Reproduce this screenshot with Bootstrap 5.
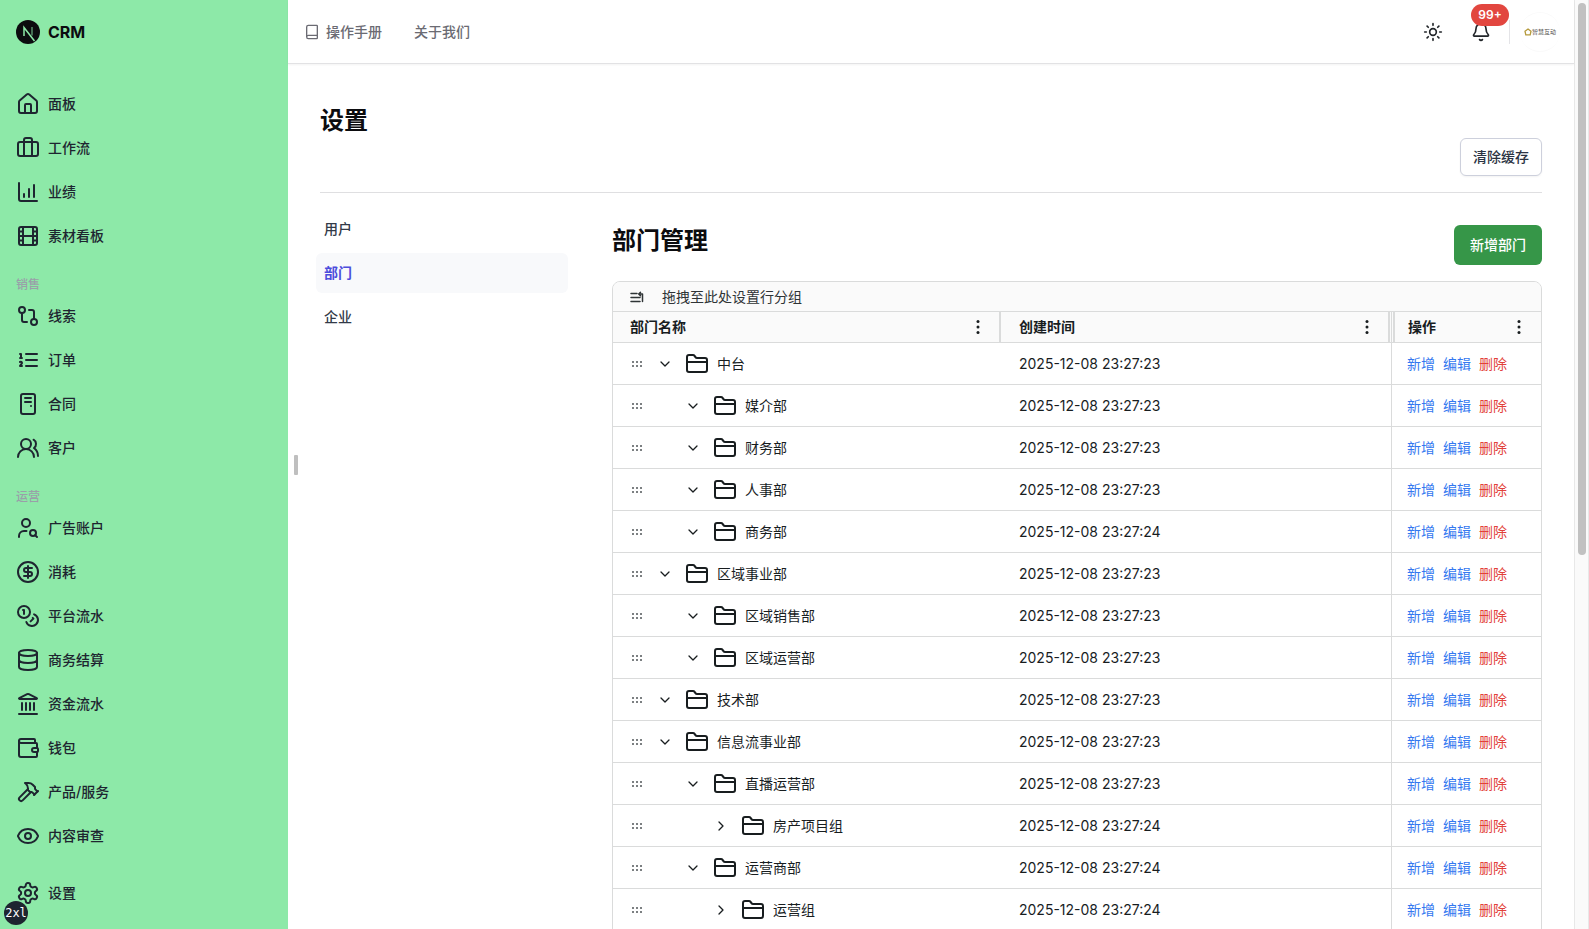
<!DOCTYPE html>
<html lang="zh-CN">
<head>
<meta charset="utf-8">
<meta name="viewport" content="width=device-width, initial-scale=1">
<title>CRM - 设置</title>
<link href="https://cdn.jsdelivr.net/npm/bootstrap@5.3.0/dist/css/bootstrap.min.css" rel="stylesheet">
<style>
  body { font-family: Inter, "Noto Sans CJK SC", sans-serif; font-size: 14px; line-height: 20px; color: #0c0c0f; background: #fff; }
  .ico { width: 24px; height: 24px; flex: none; fill: none; stroke: currentColor; stroke-width: 2; stroke-linecap: round; stroke-linejoin: round; }
  .ico-20 { width: 20px; height: 20px; }
  .ico-16 { width: 16px; height: 16px; }
  .ico-14 { width: 14px; height: 14px; }

  .side { width: 288px; flex: none; background: #8de9a8; }
  .side-brand { height: 64px; color: #0c0c0f; font-size: 16px; }
  .side-list { padding: 20px 16px 16px; }
  .side-link { height: 40px; color: #1e2530; margin-bottom: 4px; }
  .side-title { font-size: 12px; line-height: 18px; color: #9a9fa8; margin: 16px 0 2px; }
  .bp-tag { left: 4px; bottom: 4px; width: 24px; height: 24px; font: 12px/24px "DejaVu Sans Mono", monospace; background: #1e2530; }

  .top { height: 64px; flex: none; border-bottom: 1px solid #e2e2e4; box-shadow: 0 1px 2px rgba(0,0,0,.05); padding: 0 14px 0 16px; }
  .top-nav { gap: 32px; }
  .top-link { color: #6b6b73; gap: 6px; }
  .icon-btn { width: 20px; height: 20px; }
  .icon-gap { gap: 28px; }
  .count { left: 0; top: -18px; width: 38px; height: 22px; font-size: 12px; line-height: 22px; background: #e2463f; }
  .split { width: 1px; height: 24px; background: #e4e4e7; margin: 0 10px 0 18px; }
  .avatar { width: 40px; height: 40px; color: #55534f; font-size: 6px; line-height: 8px; border-top: 1px solid #fafafa; border-bottom: 1px solid #fafafa; }

  .view { flex: 1; min-width: 0; }
  .scroller { scrollbar-width: none; padding: 0 32px; }
  .track { width: 15px; flex: none; background: #fafafa; border: solid #e8e8e8; border-width: 0 1px; padding: 3px 2px 0 3px; }
  .thumb { height: 59.6%; width: 8px; background: #c1c1c1; border-radius: 4px; }
  .grip { left: 6px; top: 49%; width: 4px; height: 20px; background: #bfbfbf; border-radius: 1px; }

  .page-head { height: 129px; border-bottom: 1px solid #dfdfe1; padding-top: 40px; }
  .big { font-size: 24px; line-height: 32px; font-weight: 700; margin: 0; }
  .page-head .big { line-height: 34px; }
  .btn-clear { height: 38px; padding: 0 12px; font-size: 14px; line-height: 20px; border: 1px solid #cdd0dc; border-radius: 6px; color: #2c3444; box-shadow: 0 1px 2px rgba(0,0,0,.05); }
  .btn-add { height: 40px; padding: 0 16px; font-size: 14px; line-height: 20px; border: 0; border-radius: 6px; color: #fff; background: #369648; }
  .tabs { width: 252px; flex: none; margin-left: -4px; }
  .tab-link { height: 40px; padding: 0 8px; color: #323a48; border-radius: 6px; margin-bottom: 4px; }
  .tab-link.on { background: #f8f9fb; color: #4c4ddc; }
  .panel { margin-left: 44px; min-width: 0; }

  .gridbox { border: 1px solid #dadbdb; border-radius: 8px 8px 0 0; overflow: hidden; color: #181d1f; }
  .group-bar { height: 30px; background: #fafafa; border-bottom: 1px solid #dadbdb; padding-left: 17px; gap: 18px; color: #2f3436; }
  .gtable { width: 100%; table-layout: fixed; border-collapse: separate; border-spacing: 0; }
  .gtable th { height: 31px; background: #fafafa; border-bottom: 1px solid #dadbdb; padding: 0 16px 0 17px; font-weight: 600; position: relative; }
  .gtable td { height: 42px; border-bottom: 1px solid #dadbdb; padding: 0 17px; white-space: nowrap; }
  .gtable .pin { border-left: 1px solid #dadbdb; padding-left: 15px; padding-right: 14px; }
  .gtable th.pin { padding-left: 16px; }
  .bar-r::after, .bar-l::before { content: ""; position: absolute; top: 0; bottom: 0; width: 2px; background: #dadbdb; }
  .bar-r::after { right: 1px; }
  .bar-l::before { left: 1px; }
  .dots { fill: #181d1f; stroke: none; }
  .act { color: #3478f0; border: 0; background: none; padding: 0; }
  .act.del { color: #e2403a; }
  .toggle { margin: 0 12px 0 13px; }
  .toggle.lv1 { margin-left: 41px; }
  .toggle.lv2 { margin-left: 69px; }
</style>
</head>
<body class="vh-100 overflow-hidden">
<svg class="d-none" aria-hidden="true">
  <symbol id="i-home" viewBox="0 0 24 24"><path d="M15 21v-8a1 1 0 0 0-1-1h-4a1 1 0 0 0-1 1v8"/><path d="M3 10a2 2 0 0 1 .709-1.528l7-5.999a2 2 0 0 1 2.582 0l7 5.999A2 2 0 0 1 21 10v9a2 2 0 0 1-2 2H5a2 2 0 0 1-2-2z"/></symbol>
  <symbol id="i-case" viewBox="0 0 24 24"><path d="M16 20V4a2 2 0 0 0-2-2h-4a2 2 0 0 0-2 2v16"/><rect width="20" height="14" x="2" y="6" rx="2"/></symbol>
  <symbol id="i-chart" viewBox="0 0 24 24"><path d="M13 17V9M18 17V5M3 3v16a2 2 0 0 0 2 2h16M8 17v-3"/></symbol>
  <symbol id="i-film" viewBox="0 0 24 24"><rect width="18" height="18" x="3" y="3" rx="2"/><path d="M7 3v18M3 7.500h4M3 12h18M3 16.500h4M17 3v18M17 7.500h4M17 16.500h4"/></symbol>
  <symbol id="i-compare" viewBox="0 0 24 24"><circle cx="18" cy="18" r="3"/><circle cx="6" cy="6" r="3"/><path d="M13 6h3a2 2 0 0 1 2 2v7M11 18H8a2 2 0 0 1-2-2V9"/></symbol>
  <symbol id="i-list" viewBox="0 0 24 24"><path d="M10 12h11M10 18h11M10 6h11M4 10h2M4 6h1v4M6 18H4c0-1 2-2 2-3s-1-1.500-2-1"/></symbol>
  <symbol id="i-contract" viewBox="0 0 24 24"><rect width="14" height="20" x="5" y="2" rx="2"/><path d="M15 14h.01M9 6h6M9 10h6"/></symbol>
  <symbol id="i-users" viewBox="0 0 24 24"><path d="M18 21a8 8 0 0 0-16 0"/><circle cx="10" cy="8" r="5"/><path d="M22 20c0-3.370-2-6.500-4-8a5 5 0 0 0-.45-8.300"/></symbol>
  <symbol id="i-usersearch" viewBox="0 0 24 24"><circle cx="10" cy="7" r="4"/><path d="M3 21v-1a5 5 0 0 1 5-5h2.500"/><circle cx="17" cy="17" r="3"/><path d="m21 21-1.900-1.900"/></symbol>
  <symbol id="i-dollar" viewBox="0 0 24 24"><circle cx="12" cy="12" r="10"/><path d="M16 8h-6a2 2 0 1 0 0 4h4a2 2 0 1 1 0 4H8M12 18V6"/></symbol>
  <symbol id="i-coins" viewBox="0 0 24 24"><circle cx="8" cy="8" r="6"/><path d="M18.090 10.370A6 6 0 1 1 10.340 18M7 6h1v4M16.710 13.880l.7.710-2.820 2.820"/></symbol>
  <symbol id="i-db" viewBox="0 0 24 24"><ellipse cx="12" cy="5" rx="9" ry="3"/><path d="M3 5v14a9 3 0 0 0 18 0V5M3 12a9 3 0 0 0 18 0"/></symbol>
  <symbol id="i-bank" viewBox="0 0 24 24"><path d="M10 18v-7M11.120 2.198a2 2 0 0 1 1.760.006l7.866 3.847c.476.233.31.949-.22.949H3.474c-.53 0-.695-.716-.22-.949zM14 18v-7M18 18v-7M3 22h18M6 18v-7"/></symbol>
  <symbol id="i-wallet" viewBox="0 0 24 24"><path d="M19 7V4a1 1 0 0 0-1-1H5a2 2 0 0 0 0 4h15a1 1 0 0 1 1 1v4h-3a2 2 0 0 0 0 4h3a1 1 0 0 0 1-1v-2a1 1 0 0 0-1-1"/><path d="M3 5v14a2 2 0 0 0 2 2h15a1 1 0 0 0 1-1v-4"/></symbol>
  <symbol id="i-hammer" viewBox="0 0 24 24"><path d="m15 12-8.373 8.373a1 1 0 1 1-3-3L12 9M18 15l4-4"/><path d="m21.500 11.500-1.914-1.914A2 2 0 0 1 19 8.172V7l-2.260-2.260a6 6 0 0 0-4.202-1.756L9 2.960l.92.820A6.180 6.180 0 0 1 12 8.400V10l2 2h1.172a2 2 0 0 1 1.414.586L18.500 14.500"/></symbol>
  <symbol id="i-eye" viewBox="0 0 24 24"><path d="M2.062 12.348a1 1 0 0 1 0-.696 10.750 10.750 0 0 1 19.876 0 1 1 0 0 1 0 .696 10.750 10.750 0 0 1-19.876 0"/><circle cx="12" cy="12" r="3"/></symbol>
  <symbol id="i-gear" viewBox="0 0 24 24"><path d="M12.220 2h-.44a2 2 0 0 0-2 2v.18a2 2 0 0 1-1 1.730l-.43.25a2 2 0 0 1-2 0l-.15-.08a2 2 0 0 0-2.730.73l-.22.38a2 2 0 0 0 .73 2.730l.15.1a2 2 0 0 1 1 1.720v.51a2 2 0 0 1-1 1.740l-.15.09a2 2 0 0 0-.73 2.730l.22.38a2 2 0 0 0 2.730.73l.15-.08a2 2 0 0 1 2 0l.43.25a2 2 0 0 1 1 1.730V20a2 2 0 0 0 2 2h.44a2 2 0 0 0 2-2v-.18a2 2 0 0 1 1-1.730l.43-.25a2 2 0 0 1 2 0l.15.08a2 2 0 0 0 2.730-.73l.22-.39a2 2 0 0 0-.73-2.730l-.15-.08a2 2 0 0 1-1-1.740v-.5a2 2 0 0 1 1-1.740l.15-.09a2 2 0 0 0 .73-2.730l-.22-.38a2 2 0 0 0-2.730-.73l-.15.08a2 2 0 0 1-2 0l-.43-.25a2 2 0 0 1-1-1.730V4a2 2 0 0 0-2-2z"/><circle cx="12" cy="12" r="3"/></symbol>
  <symbol id="i-folder" viewBox="0 0 24 24"><path d="M20 20a2 2 0 0 0 2-2V8a2 2 0 0 0-2-2h-7.900a2 2 0 0 1-1.690-.9L9.600 3.900A2 2 0 0 0 7.930 3H4a2 2 0 0 0-2 2v13a2 2 0 0 0 2 2ZM2 10h20"/></symbol>
  <symbol id="i-down" viewBox="0 0 16 16"><path d="M4 6l4 4 4-4" stroke-width="1.300"/></symbol>
  <symbol id="i-right" viewBox="0 0 16 16"><path d="M6 4l4 4-4 4" stroke-width="1.300"/></symbol>
  <symbol id="i-grip" viewBox="0 0 14 14"><path d="M2 4h2v2h-2zM6 4h2v2h-2zM10 4h2v2h-2zM2 8h2v2h-2zM6 8h2v2h-2zM10 8h2v2h-2z" fill="#7c8082" stroke="none"/></symbol>
  <symbol id="i-more" viewBox="0 0 16 16"><circle cx="8" cy="2.500" r="1.500"/><circle cx="8" cy="8" r="1.500"/><circle cx="8" cy="13.500" r="1.500"/></symbol>
</svg>

<div class="d-flex h-100">
  <aside class="side d-flex flex-column position-relative">
    <a href="#" class="side-brand d-flex align-items-center gap-2 px-3 fw-bold text-decoration-none">
      <svg class="flex-shrink-0" width="24" height="24" viewBox="0 0 24 24"><circle cx="12" cy="12" r="12" fill="#0c0c0f"/><path d="M8 16V7.500L18.500 21" fill="none" stroke="#8de9a8" stroke-width="1.500"/><path d="M16 7v8.500" stroke="#8de9a8" stroke-width="1.200" opacity=".75"/></svg>
      CRM
    </a>
    <nav class="side-list d-flex flex-column flex-grow-1" id="side"></nav>
    <span class="bp-tag position-absolute rounded-circle text-white text-center">2xl</span>
  </aside>

  <div class="view d-flex flex-column position-relative">
    <header class="top d-flex align-items-center">
      <nav class="top-nav d-flex align-items-center">
        <a href="#" class="top-link d-flex align-items-center fw-medium text-decoration-none"><svg class="ico ico-16" viewBox="0 0 24 24"><path d="M4 19.500v-15A2.500 2.500 0 0 1 6.500 2H19a1 1 0 0 1 1 1v18a1 1 0 0 1-1 1H6.500a1 1 0 0 1 0-5H20"/></svg>操作手册</a>
        <a href="#" class="top-link fw-medium text-decoration-none">关于我们</a>
      </nav>
      <div class="d-flex align-items-center ms-auto">
        <div class="icon-gap d-flex">
          <button class="icon-btn btn border-0 p-0 d-flex" aria-label="切换主题"><svg class="ico ico-20" viewBox="0 0 24 24"><circle cx="12" cy="12" r="4"/><path d="M12 2v2M12 20v2M4.930 4.930l1.410 1.410M17.660 17.660l1.410 1.410M2 12h2M20 12h2M6.340 17.660l-1.410 1.410M19.070 4.930l-1.410 1.410"/></svg></button>
          <button class="icon-btn btn border-0 p-0 d-flex position-relative" aria-label="通知"><svg class="ico ico-20" viewBox="0 0 24 24"><path d="M10.268 21a2 2 0 0 0 3.464 0M3.262 15.326A1 1 0 0 0 4 17h16a1 1 0 0 0 .740-1.673C19.410 13.956 18 12.499 18 8A6 6 0 0 0 6 8c0 4.499-1.411 5.956-2.738 7.326"/></svg><span class="count position-absolute rounded-pill text-white fw-semibold text-center">99+</span></button>
        </div>
        <span class="split"></span>
        <a href="#" class="avatar rounded-circle d-flex align-items-center justify-content-center text-decoration-none" aria-label="账户"><svg class="flex-shrink-0" width="8" height="8" viewBox="0 0 8 8"><path d="M4 1 7 3.200 6.200 6.800H1.800L1 3.200z" fill="none" stroke="#b59a3c" stroke-width="1.300"/></svg><span class="text-nowrap">智慧互动</span></a>
      </div>
    </header>

    <main class="scroller flex-grow-1 overflow-auto">
      <div class="page-head">
        <h1 class="big">设置</h1>
        <div class="d-flex justify-content-end"><button class="btn btn-clear fw-medium bg-white">清除缓存</button></div>
      </div>
      <div class="d-flex">
        <nav class="tabs pt-3">
          <a href="#" class="tab-link d-flex align-items-center fw-medium text-decoration-none">用户</a>
          <a href="#" class="tab-link on d-flex align-items-center fw-semibold text-decoration-none" aria-current="page">部门</a>
          <a href="#" class="tab-link d-flex align-items-center fw-medium text-decoration-none">企业</a>
        </nav>
        <section class="panel flex-grow-1">
          <div class="d-flex justify-content-between mt-4 pt-2 mb-3">
            <h2 class="big">部门管理</h2>
            <button class="btn btn-add fw-medium">新增部门</button>
          </div>
          <div class="gridbox">
            <div class="group-bar d-flex align-items-center"><svg class="ico ico-14" viewBox="0 0 14 14"><path d="M1 3.500h6M1 7.500h9M1 11.500h9M12.500 11.500V4H9M10.500 2.200 8.700 4l1.800 1.800" stroke-width="1.500"/></svg>拖拽至此处设置行分组</div>
            <table class="gtable">
              <colgroup><col><col><col width="150"></colgroup>
              <thead><tr>
                <th scope="col" class="bar-r"><div class="d-flex align-items-center justify-content-between">部门名称<svg class="ico ico-16 dots"><use href="#i-more"/></svg></div></th>
                <th scope="col" class="bar-r"><div class="d-flex align-items-center justify-content-between">创建时间<svg class="ico ico-16 dots"><use href="#i-more"/></svg></div></th>
                <th scope="col" class="pin bar-l"><div class="d-flex align-items-center justify-content-between">操作<svg class="ico ico-16 dots"><use href="#i-more"/></svg></div></th>
              </tr></thead>
              <tbody id="rows"></tbody>
            </table>
          </div>
        </section>
      </div>
    </main>
    <span class="grip position-absolute"></span>
  </div>
  <div class="track"><div class="thumb"></div></div>
</div>

<script src="https://cdn.jsdelivr.net/npm/bootstrap@5.3.0/dist/js/bootstrap.bundle.min.js"></script>
<script>
  const menu = [
    ['home', '面板'], ['case', '工作流'], ['chart', '业绩'], ['film', '素材看板'],
    '销售', ['compare', '线索'], ['list', '订单'], ['contract', '合同'], ['users', '客户'],
    '运营', ['usersearch', '广告账户'], ['dollar', '消耗'], ['coins', '平台流水'], ['db', '商务结算'],
    ['bank', '资金流水'], ['wallet', '钱包'], ['hammer', '产品/服务'], ['eye', '内容审查'], ['gear', '设置']
  ];
  document.getElementById('side').innerHTML = menu.map((m, i) => typeof m === 'string'
    ? `<div class="side-title fw-medium">${m}</div>`
    : `<a href="#" class="side-link d-flex align-items-center gap-2 fw-medium text-decoration-none${i === menu.length - 1 ? ' mt-auto mb-0' : ''}"><svg class="ico"><use href="#i-${m[0]}"/></svg>${m[1]}</a>`).join('');

  // name, depth, second of creation, open
  const rows = [
    ['中台', 0, 23, 1], ['媒介部', 1, 23, 1], ['财务部', 1, 23, 1], ['人事部', 1, 23, 1], ['商务部', 1, 24, 1],
    ['区域事业部', 0, 23, 1], ['区域销售部', 1, 23, 1], ['区域运营部', 1, 23, 1], ['技术部', 0, 23, 1],
    ['信息流事业部', 0, 23, 1], ['直播运营部', 1, 23, 1], ['房产项目组', 2, 24, 0], ['运营商部', 1, 24, 1], ['运营组', 2, 24, 0]
  ];
  document.getElementById('rows').innerHTML = rows.map(([name, depth, sec, open]) => `
    <tr>
      <td><div class="d-flex align-items-center"><svg class="ico ico-14"><use href="#i-grip"/></svg>
        <svg class="ico ico-16 toggle lv${depth}"><use href="#i-${open ? 'down' : 'right'}"/></svg>
        <svg class="ico"><use href="#i-folder"/></svg><span class="ms-2">${name}</span></div></td>
      <td>2025-12-08 23:27:${sec}</td>
      <td class="pin"><div class="d-flex gap-2"><button class="act">新增</button><button class="act">编辑</button><button class="act del">删除</button></div></td>
    </tr>`).join('');
</script>
</body>
</html>
